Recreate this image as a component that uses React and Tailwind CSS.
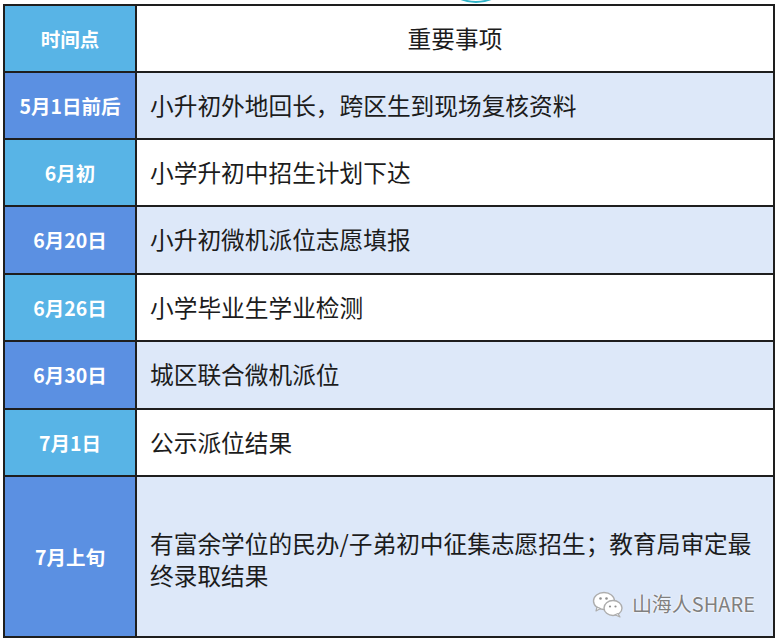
import React from "react";

const rows = [
  { t: "5月1日前后", d: "小升初外地回长，跨区生到现场复核资料", dark: true, h: "h-[67px]" },
  { t: "6月初", d: "小学升初中招生计划下达", dark: false, h: "h-[67px]" },
  { t: "6月20日", d: "小升初微机派位志愿填报", dark: true, h: "h-[68px]" },
  { t: "6月26日", d: "小学毕业生学业检测", dark: false, h: "h-[67px]" },
  { t: "6月30日", d: "城区联合微机派位", dark: true, h: "h-[68px]" },
  { t: "7月1日", d: "公示派位结果", dark: false, h: "h-[67px]" },
];

function WeChatIcon() {
  return (
    <svg width="32" height="28" viewBox="0 0 32 28">
      <ellipse cx="12" cy="11" rx="10.5" ry="8.5" fill="#fff" stroke="#adadad" strokeWidth="1.4" />
      <path d="M5 17 L4 21 L8.5 18.5 Z" fill="#fff" stroke="#adadad" strokeWidth="1.2" strokeLinejoin="round" />
      <circle cx="8.5" cy="8.5" r="1.3" fill="#8f8f8f" />
      <circle cx="14.5" cy="8.5" r="1.3" fill="#8f8f8f" />
      <ellipse cx="21" cy="18" rx="9" ry="7.5" fill="#fff" stroke="#adadad" strokeWidth="1.4" />
      <path d="M26 23.5 L28 27 L23 24.8 Z" fill="#fff" stroke="#adadad" strokeWidth="1.2" strokeLinejoin="round" />
      <circle cx="18" cy="16.5" r="1.1" fill="#8f8f8f" />
      <circle cx="23.5" cy="16.5" r="1.1" fill="#8f8f8f" />
    </svg>
  );
}

export default function App() {
  const font = { fontFamily: '"Noto Sans CJK SC", "Noto Sans", sans-serif' };
  return (
    <div className="relative w-[781px] h-[642px] bg-white overflow-hidden" style={font}>
      <div className="absolute left-[436px] top-[-77px] w-[80px] h-[80px] rounded-full border-[2.5px] border-[#2fb3c7]" />
      <div className="absolute left-[3px] top-[4px] w-[772px] h-[634px] border-2 border-[#1e1e1e] flex flex-col">
        <div className="flex h-[67px] border-b-2 border-[#1e1e1e] shrink-0">
          <div className="w-[132px] shrink-0 border-r-2 border-[#1e1e1e] bg-[#58b4e6] flex items-center justify-center text-white font-bold text-[19.5px]">
            时间点
          </div>
          <div className="flex-1 bg-white flex items-center justify-center text-[#1c1c1c] text-[23.7px]">
            重要事项
          </div>
        </div>
        {rows.map((r, i) => (
          <div key={i} className={`flex ${r.h} border-b-2 border-[#1e1e1e] shrink-0`}>
            <div
              className={`w-[132px] shrink-0 border-r-2 border-[#1e1e1e] flex items-center justify-center text-white font-bold text-[19.5px] ${
                r.dark ? "bg-[#5b90e2]" : "bg-[#58b4e6]"
              }`}
            >
              {r.t}
            </div>
            <div
              className={`flex-1 flex items-center pl-[13px] text-[#1c1c1c] text-[23.7px] ${
                r.dark ? "bg-[#dde8f9]" : "bg-white"
              }`}
            >
              {r.d}
            </div>
          </div>
        ))}
        <div className="flex flex-1">
          <div className="w-[132px] shrink-0 border-r-2 border-[#1e1e1e] bg-[#5b90e2] flex items-center justify-center text-white font-bold text-[19.5px]">
            7月上旬
          </div>
          <div className="relative flex-1 bg-[#dde8f9] flex items-center pl-[13px] pt-[4px] text-[#1c1c1c] text-[23.7px] leading-[32px]">
            <div>
              有富余学位的民办/子弟初中征集志愿招生；教育局审定最
              <br />
              终录取结果
            </div>
            <div className="absolute right-[18px] bottom-[16px] flex items-center gap-[8px]">
              <WeChatIcon />
              <span
                className="text-[20px] text-[#808080]"
                style={{ textShadow: "0 0 2px #fff, 0 0 2px #fff" }}
              >
                山海人SHARE
              </span>
            </div>
          </div>
        </div>
      </div>
    </div>
  );
}
